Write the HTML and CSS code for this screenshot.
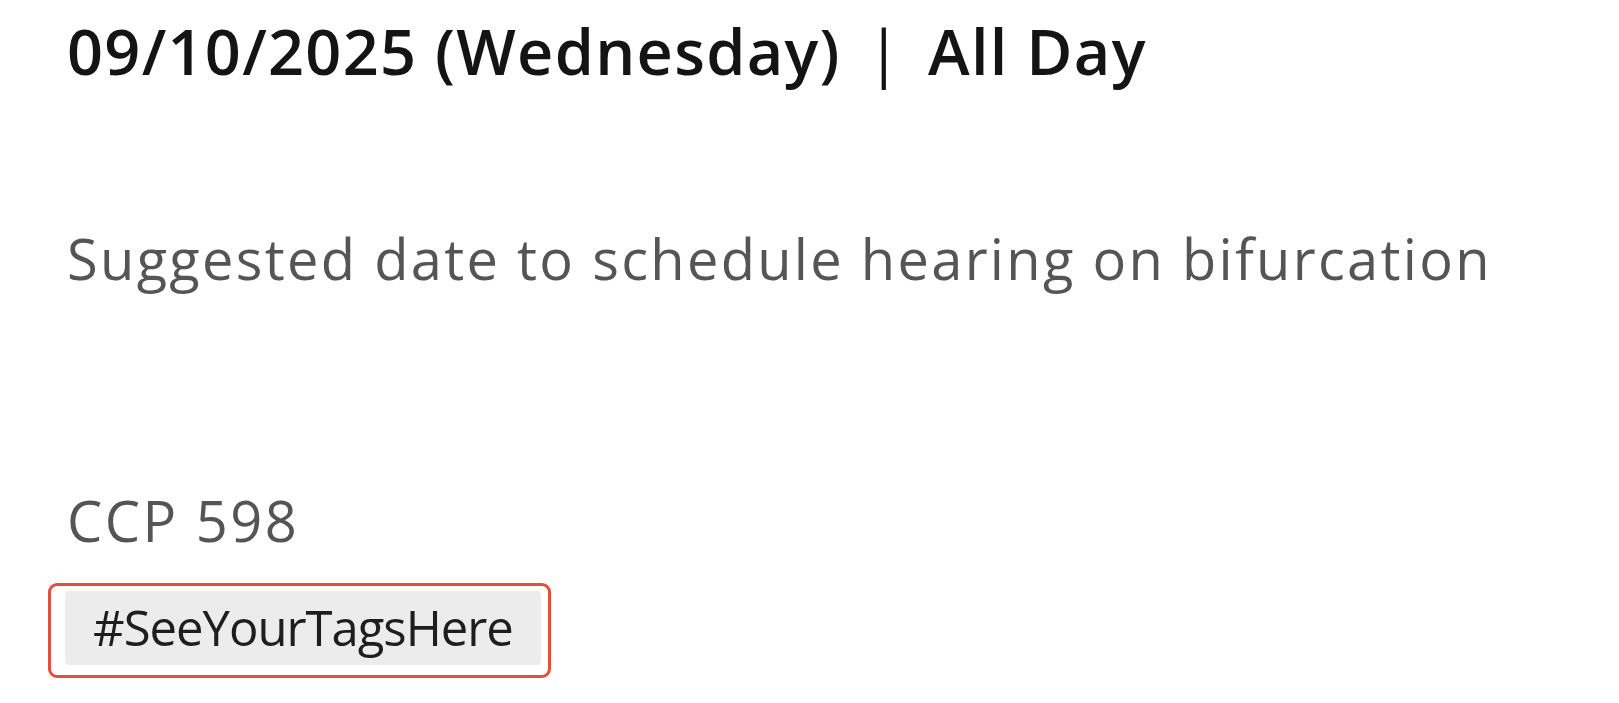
FILE: index.html
```html
<!DOCTYPE html>
<html>
<head>
<meta charset="utf-8">
<link rel="stylesheet" href="styles.css">
</head>
<body>
<div class="event">
  <h1 class="event-title">09/10/2025 (Wednesday) <span class="sep">|</span> All Day</h1>
  <p class="event-desc">Suggested date to schedule hearing on bifurcation</p>
  <p class="event-ref">CCP 598</p>
  <div class="tag-highlight">
    <span class="tag">#SeeYourTagsHere</span>
  </div>
</div>
</body>
</html>
```
FILE: styles.css
```css
html, body {
  margin: 0;
  padding: 0;
  background: #ffffff;
}
body {
  font-family: "Open Sans", "Noto Sans", sans-serif;
}
.event {
  display: flex;
  flex-direction: column;
  align-items: flex-start;
  padding: 19px 0 0 67px;
}
.event-title {
  margin: 0;
  font-size: 63px;
  line-height: 1;
  font-weight: 600;
  letter-spacing: 1.3px;
  color: #141414;
  white-space: nowrap;
}
.sep {
  margin: 0 8px;
  font-weight: 400;
}
.event-desc {
  margin: 148px 0 0;
  font-size: 56px;
  line-height: 1;
  letter-spacing: 2.3px;
  color: #555555;
  white-space: nowrap;
}
.event-ref {
  margin: 206px 0 0;
  font-size: 56px;
  line-height: 1;
  letter-spacing: 2.5px;
  color: #555555;
}
.tag-highlight {
  margin: 35px 0 0 -19px;
  border: 3px solid #e2503c;
  border-radius: 9px;
  padding: 5px 7px 10px 14px;
}
.tag {
  display: block;
  background: #ececec;
  border-radius: 4px;
  padding: 12px 28px 13px;
  font-size: 49px;
  line-height: 1;
  letter-spacing: -1px;
  color: #1e1e1e;
}
```
